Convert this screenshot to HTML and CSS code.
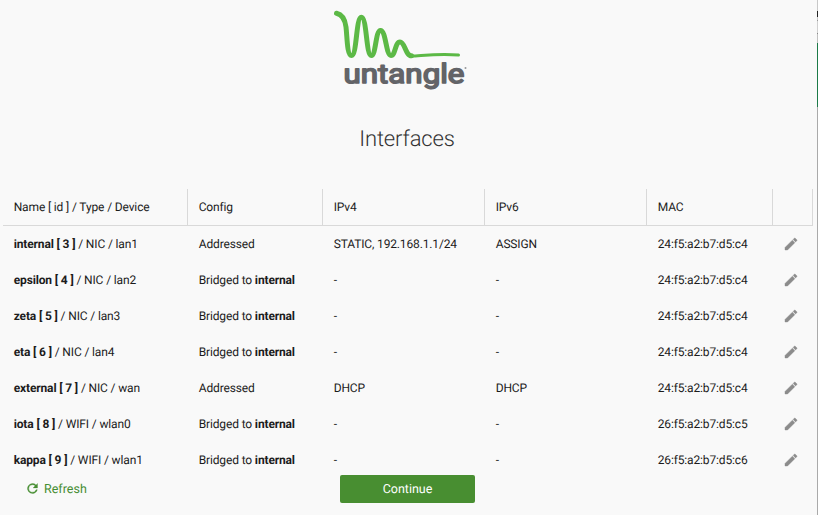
FILE: index.html
```html
<!DOCTYPE html>
<html lang="en">
<head>
<meta charset="utf-8">
<title>Interfaces</title>
<link rel="stylesheet" href="styles.css">
</head>
<body>
<svg class="defs" aria-hidden="true">
  <symbol id="pencil" viewBox="0 0 24 24"><path d="M3 17.25V21h3.75L17.81 9.94l-3.75-3.75L3 17.25zM20.71 7.04a1 1 0 0 0 0-1.41l-2.34-2.34a1 1 0 0 0-1.41 0l-1.83 1.83 3.75 3.75 1.83-1.83z"/></symbol>
</svg>
<main class="wizard">
  <header class="brand">
    <svg class="logo" width="150" height="100" viewBox="0 0 150 100">
      <path class="coil" d="M11.500 13.300C17 14.500 20 19 21 27C22.200 37 22 55.500 26.500 55.500C32 55.500 31 17.300 36.300 17.300C42 17.300 41 55.500 46.300 55.500C51 55.500 50.500 30.500 55.500 30.500C61 30.500 61 55.500 66 55.500C70.500 55.500 70 42 75 42C80 42 80.500 55.800 86.500 55.800"/>
      <path class="coil tail" d="M86.500 56C98 55.500 115 53.200 133.500 55"/>
      <text class="wordmark" x="18.500" y="83.300" textLength="121" lengthAdjust="spacingAndGlyphs">untangle</text>
      <circle class="mark" cx="140.500" cy="68" r="1"/>
    </svg>
  </header>
  <h1 class="title">Interfaces</h1>
  <table class="grid">
    <colgroup><col class="c-name"><col class="c-config"><col class="c-ip"><col class="c-ip"><col class="c-mac"><col class="c-edit"></colgroup>
    <thead><tr><th>Name [ id ] / Type / Device</th><th>Config</th><th>IPv4</th><th>IPv6</th><th>MAC</th><th></th></tr></thead>
    <tbody>
      <tr><td><b>internal [ 3 ]</b> / NIC / lan1</td><td>Addressed</td><td>STATIC, 192.168.1.1/24</td><td>ASSIGN</td><td>24:f5:a2:b7:d5:c4</td><td><svg class="edit"><use href="#pencil"/></svg></td></tr>
      <tr><td><b>epsilon [ 4 ]</b> / NIC / lan2</td><td>Bridged to <b>internal</b></td><td>-</td><td>-</td><td>24:f5:a2:b7:d5:c4</td><td><svg class="edit"><use href="#pencil"/></svg></td></tr>
      <tr><td><b>zeta [ 5 ]</b> / NIC / lan3</td><td>Bridged to <b>internal</b></td><td>-</td><td>-</td><td>24:f5:a2:b7:d5:c4</td><td><svg class="edit"><use href="#pencil"/></svg></td></tr>
      <tr><td><b>eta [ 6 ]</b> / NIC / lan4</td><td>Bridged to <b>internal</b></td><td>-</td><td>-</td><td>24:f5:a2:b7:d5:c4</td><td><svg class="edit"><use href="#pencil"/></svg></td></tr>
      <tr><td><b>external [ 7 ]</b> / NIC / wan</td><td>Addressed</td><td>DHCP</td><td>DHCP</td><td>24:f5:a2:b7:d5:c4</td><td><svg class="edit"><use href="#pencil"/></svg></td></tr>
      <tr><td><b>iota [ 8 ]</b> / WIFI / wlan0</td><td>Bridged to <b>internal</b></td><td>-</td><td>-</td><td>26:f5:a2:b7:d5:c5</td><td><svg class="edit"><use href="#pencil"/></svg></td></tr>
      <tr><td><b>kappa [ 9 ]</b> / WIFI / wlan1</td><td>Bridged to <b>internal</b></td><td>-</td><td>-</td><td>26:f5:a2:b7:d5:c6</td><td><svg class="edit"><use href="#pencil"/></svg></td></tr>
    </tbody>
  </table>
  <footer class="actions">
    <button class="refresh"><svg class="reload" viewBox="0 0 24 24"><path d="M17.650 6.350A8 8 0 1 0 19.730 14h-2.080A6 6 0 1 1 12 6c1.660 0 3.140.690 4.220 1.780L13 11h7V4l-2.350 2.350z"/></svg>Refresh</button>
    <button class="continue">Continue</button>
  </footer>
</main>
<div class="edge"></div>
</body>
</html>
```
FILE: styles.css
```css
* { box-sizing: border-box; }
body {
  margin: 0;
  height: 515px;
  overflow: hidden;
  display: flex;
  background: #f9f9f9;
  color: #1c1c1c;
  font-family: Roboto, "Liberation Sans", sans-serif;
  font-size: 12px;
  text-rendering: geometricPrecision;
}
.defs { display: none; }
.wizard { width: 817px; display: flex; flex-direction: column; }
.brand { height: 100px; padding-left: 325px; }
.logo { display: block; }
.coil { fill: none; stroke: #5cb946; stroke-width: 5; stroke-linecap: round; stroke-linejoin: round; }
.coil.tail { stroke-width: 3; }
.wordmark {
  font: 400 27px Roboto, sans-serif;
  fill: #636468;
  stroke: #636468;
  stroke-width: 1.6;
  stroke-linejoin: round;
}
.mark { fill: #97989b; }
.title {
  margin: 0;
  height: 89px;
  padding: 26px 3px 0 0;
  line-height: 28px;
  text-align: center;
  font-size: 22px;
  font-weight: 300;
  letter-spacing: -0.15px;
  color: #333;
}
.grid {
  width: 810px;
  margin-left: 3px;
  table-layout: fixed;
  border-collapse: separate;
  border-spacing: 0;
  letter-spacing: -0.14px;
}
.c-name { width: 185px; }
.c-config { width: 135px; }
.c-ip { width: 162px; }
.c-mac { width: 126px; }
.c-edit { width: 40px; }
th, td {
  height: 36px;
  padding: 0 0 0 10.7px;
  text-align: left;
  font-weight: 400;
  line-height: 16px;
  white-space: nowrap;
}
th { height: 37px; border-right: 1px solid #d9d9d9; border-bottom: 1px solid #d9d9d9; }
b { font-weight: 700; }
.edit { display: block; width: 16px; height: 16px; margin-left: -0.7px; fill: #8c8c8c; stroke: #8c8c8c; stroke-width: 0.6; }
.actions { display: flex; align-items: center; margin-top: -3px; height: 28px; }
button {
  display: flex;
  align-items: center;
  border: 0;
  padding: 0;
  background: none;
  font: 400 12.5px Roboto, sans-serif;
  text-rendering: inherit;
}
.refresh { width: 340px; padding-left: 25px; gap: 4px; color: #468d32; }
.reload { width: 15px; height: 15px; margin-bottom: 2px; fill: #468d32; stroke: #468d32; stroke-width: 0.5; }
.continue {
  width: 135px;
  height: 28px;
  justify-content: center;
  border-radius: 2px;
  background: #488e31;
  color: #fff;
}
.edge {
  width: 1px;
  background: linear-gradient(#c8c8c8 0 11px, #222 11px 17px, #c8c8c8 17px 20px, #999 20px 21px, #d0d0d0 21px 33px, #888 33px 34px, #c0c0c0 34px 43px, #1c7a48 43px 107px, #aaa 107px);
}
```
